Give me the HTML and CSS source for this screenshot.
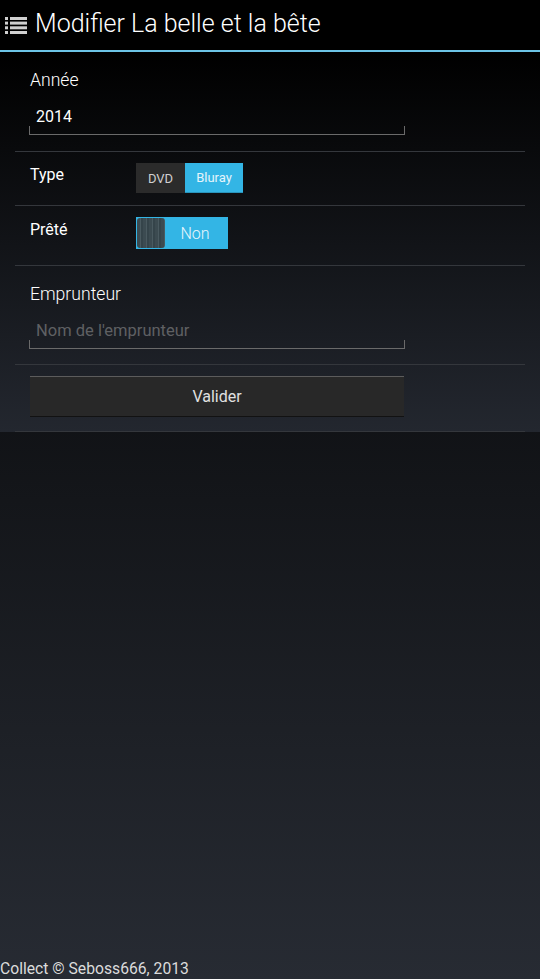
FILE: index.html
```html
<!DOCTYPE html>
<html lang="fr">
<head>
<meta charset="utf-8">
<title>Modifier La belle et la bête</title>
<link rel="stylesheet" href="styles.css">
</head>
<body>
<header class="header">
  <svg class="header-icon" width="22" height="17" viewBox="0 0 22 17">
    <rect x="0" y="0" width="3" height="3"/>
    <rect x="5" y="0" width="17" height="3"/>
    <rect x="0" y="4.6" width="3" height="3"/>
    <rect x="5" y="4.6" width="17" height="3"/>
    <rect x="0" y="9.3" width="3" height="3"/>
    <rect x="5" y="9.3" width="17" height="3"/>
    <rect x="0" y="14" width="3" height="3"/>
    <rect x="5" y="14" width="17" height="3"/>
  </svg>
  <h1 class="title">Modifier La belle et la bête</h1>
</header>
<main class="content">
  <div class="field field-first">
    <label class="label">Année</label>
    <div class="input-wrap"><input class="input" type="text" value="2014"></div>
  </div>
  <div class="field row">
    <span class="row-label">Type</span>
    <div class="segmented">
      <span class="seg seg-dvd">DVD</span>
      <span class="seg seg-active">Bluray</span>
    </div>
  </div>
  <div class="field row row-toggle">
    <span class="row-label">Prêté</span>
    <div class="toggle">
      <span class="knob"></span>
      <span class="toggle-text">Non</span>
    </div>
  </div>
  <div class="field field-second">
    <label class="label">Emprunteur</label>
    <div class="input-wrap"><input class="input input-placeholder" type="text" placeholder="Nom de l'emprunteur"></div>
  </div>
  <div class="field field-button">
    <button class="button">Valider</button>
  </div>
</main>
<div class="spacer"></div>
<footer class="footer">Collect © Seboss666, 2013</footer>
</body>
</html>
```
FILE: styles.css
```css
html, body {
  margin: 0;
  padding: 0;
}
body {
  height: 979px;
  display: flex;
  flex-direction: column;
  background: linear-gradient(#000000, #272b33);
  font-family: Roboto, "Liberation Sans", sans-serif;
  color: #fff;
}
.header {
  height: 50px;
  background: #000;
  border-bottom: 2px solid #6cc4e6;
  display: flex;
  align-items: center;
  padding-left: 5px;
  box-sizing: content-box;
  flex-shrink: 0;
}
.header-icon {
  fill: #d0d0d0;
  margin-right: 8px;
  margin-top: 1px;
}
.title {
  margin: 0;
  font-size: 25px;
  font-weight: 300;
  line-height: 50px;
  color: #fff;
  margin-top: -3px;
  transform: scaleY(1.06);
}
.content {
  background: linear-gradient(#000000, #23272f);
  padding: 0 15px;
  flex-shrink: 0;
}
.field {
  border-bottom: 1px solid #34373c;
}
.field-first {
  padding: 18px 0 16px;
}
.field-second {
  padding: 18px 0 15px;
}
.label {
  display: block;
  font-size: 17.6px;
  font-weight: 300;
  line-height: 20px;
  padding-left: 15px;
  color: #fff;
}
.input-wrap {
  position: relative;
  margin: 7px 0 0 14px;
  width: 376px;
  box-sizing: border-box;
  padding: 10px 6px 7px 7px;
  border-bottom: 1px solid #6a6a6a;
}
.input-wrap::before,
.input-wrap::after {
  content: "";
  position: absolute;
  bottom: 0;
  width: 1px;
  height: 8px;
  background: #6a6a6a;
}
.input-wrap::before { left: 0; }
.input-wrap::after { right: 0; }
.input {
  display: block;
  width: 100%;
  height: 20px;
  padding: 0;
  margin: 0;
  border: none;
  outline: none;
  background: transparent;
  font-family: inherit;
  font-size: 16px;
  line-height: 20px;
  color: #fff;
}
.input-placeholder {
  font-size: 16.5px;
}
.input::placeholder {
  color: #5f6063;
}
.row {
  display: flex;
  align-items: flex-start;
  padding: 11px 0 12px 15px;
}
.row-toggle {
  padding-bottom: 16px;
}
.row-label {
  width: 106px;
  font-size: 16px;
  line-height: 20px;
  font-weight: 400;
  color: #fff;
  margin-top: 2px;
}
.row-toggle .row-label {
  margin-top: 3px;
}
.segmented {
  display: flex;
  height: 30px;
}
.seg {
  display: flex;
  align-items: center;
  justify-content: center;
  font-size: 13px;
  height: 30px;
  box-sizing: border-box;
}
.seg-dvd {
  width: 49px;
  background: #2b2b2b;
  color: #cfcfcf;
}
.seg-active {
  width: 58px;
  background: #33b5e5;
  color: #e4f4fb;
  border-bottom: 1px solid #2a94bb;
}
.toggle {
  width: 92px;
  height: 32px;
  background: #33b5e5;
  display: flex;
  align-items: center;
  padding: 1px;
  box-sizing: border-box;
}
.knob {
  width: 28px;
  height: 30px;
  border-radius: 3px;
  background: repeating-linear-gradient(90deg, #3c4b51 0 3px, #4a5a60 3px 4px, #35444a 4px 6px);
  flex-shrink: 0;
}
.toggle-text {
  flex: 1;
  text-align: center;
  font-size: 16px;
  font-weight: 300;
  color: #e8f6fc;
  margin-left: -2px;
}
.field-button {
  padding: 11px 0 14px 15px;
}
.button {
  display: block;
  width: 374px;
  height: 41px;
  background: #282828;
  border: none;
  border-top: 1px solid #5c5c5c;
  border-bottom: 1px solid #121212;
  color: #e0e0e0;
  font-family: inherit;
  font-size: 16px;
  padding: 0;
  margin: 0;
}
.spacer {
  flex: 1;
}
.footer {
  font-size: 15.7px;
  line-height: 20px;
  color: #dcdcdc;
  flex-shrink: 0;
}
```
